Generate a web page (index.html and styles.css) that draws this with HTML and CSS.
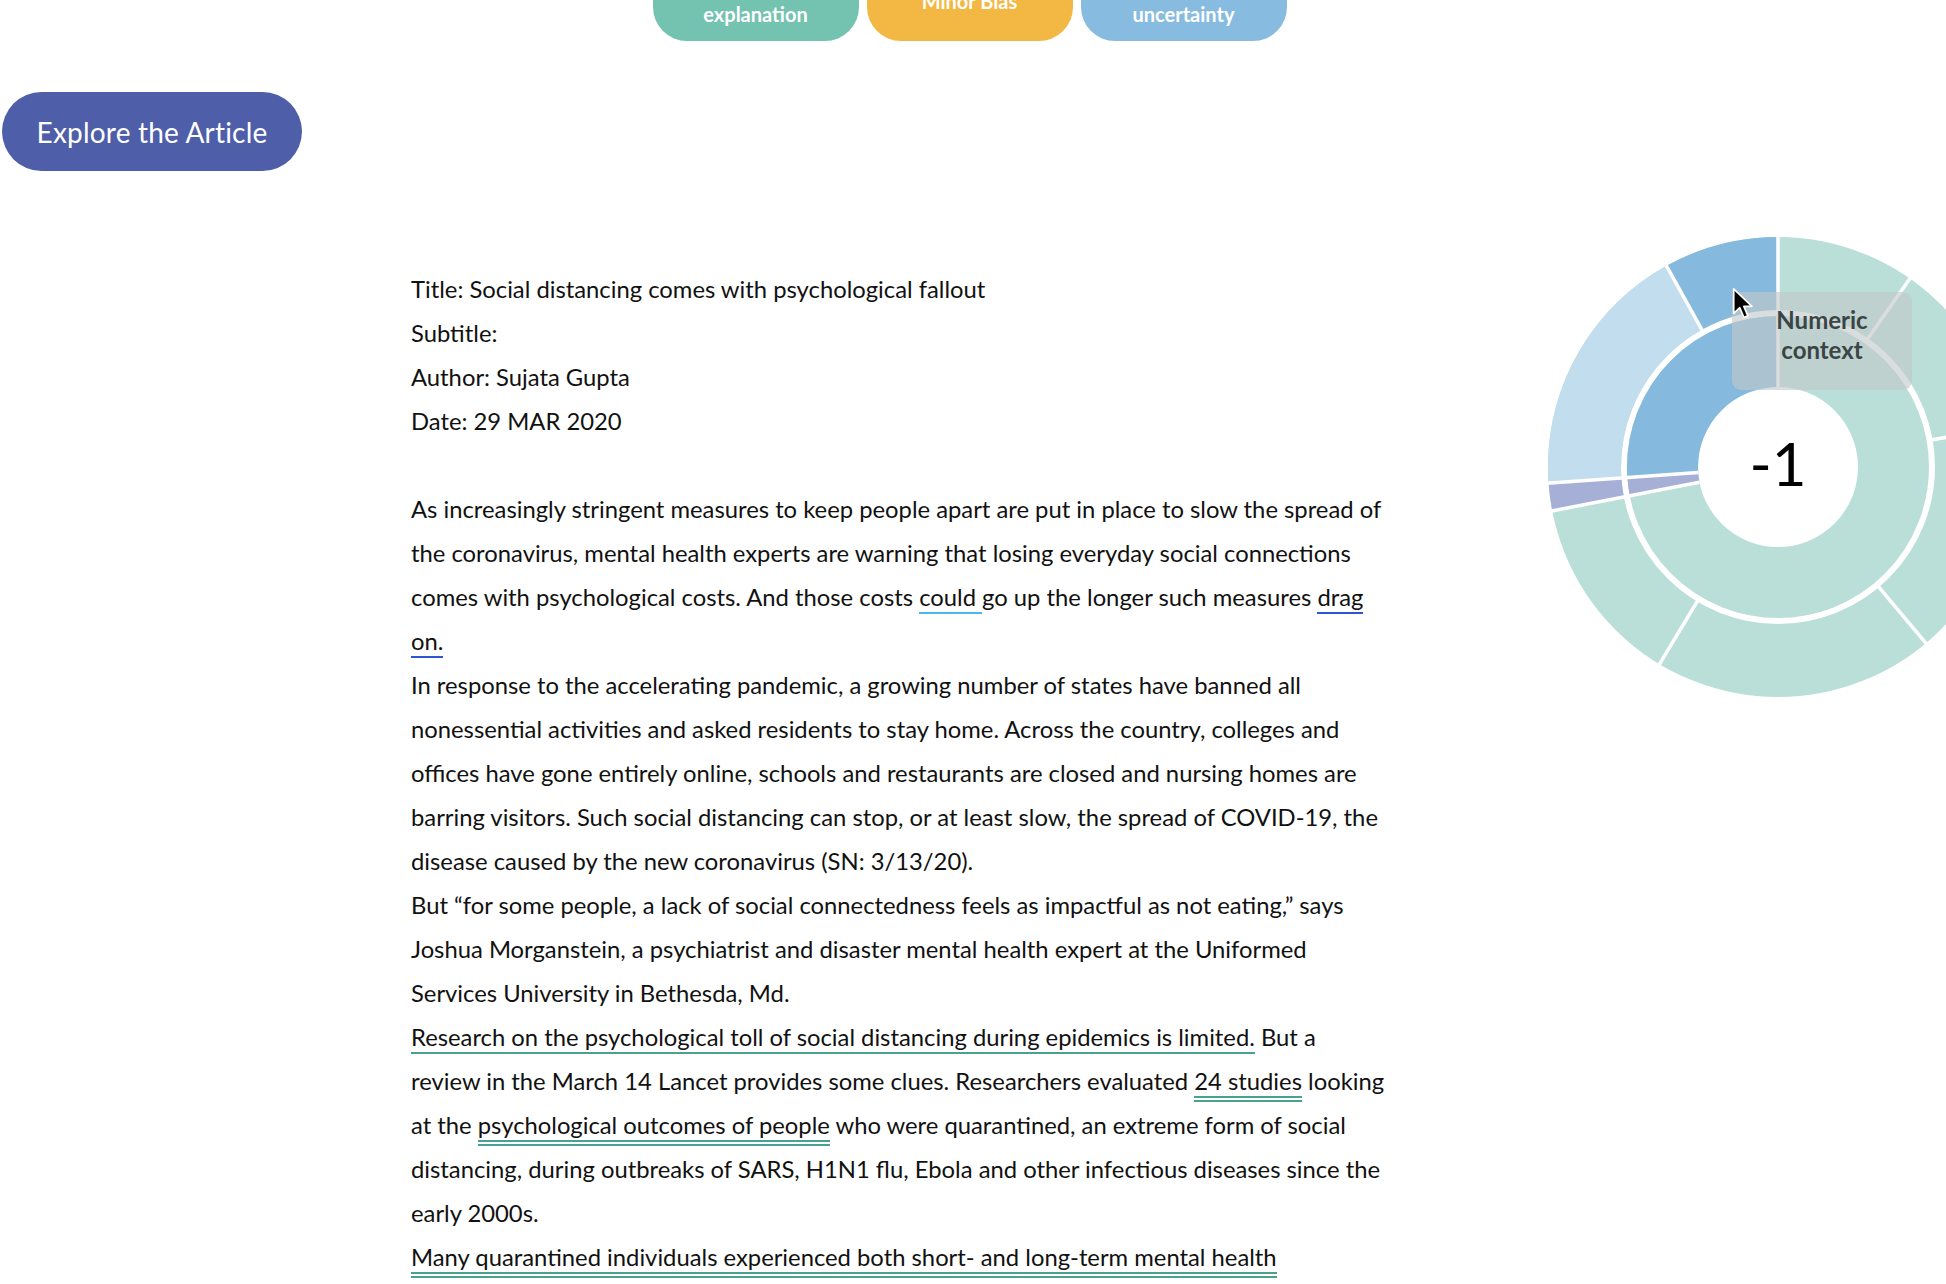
FILE: index.html
```html
<!DOCTYPE html>
<html lang="en">
<head>
<meta charset="utf-8">
<title>Explore the Article</title>
<link rel="stylesheet" href="styles.css">
</head>
<body>
<div class="page">
  <nav class="tags">
    <span class="tag tag-teal">Lacks<br>explanation</span>
    <span class="tag tag-yellow">Minor Bias</span>
    <span class="tag tag-blue">Acknowledging<br>uncertainty</span>
  </nav>

  <div class="explore-row">
    <button class="explore">Explore the Article</button>
  </div>

  <main class="content">
    <article class="article">
      <div class="meta">
        <p>Title: Social distancing comes with psychological fallout</p>
        <p>Subtitle:</p>
        <p>Author: Sujata Gupta</p>
        <p>Date: 29 MAR 2020</p>
      </div>
      <p>As increasingly stringent measures to keep people apart are put in place to slow the spread of the coronavirus, mental health experts are warning that losing everyday social connections comes with psychological costs. And those costs <span class="u u-light">could </span>go up the longer such measures <span class="u u-dark">drag on.</span></p>
      <p>In response to the accelerating pandemic, a growing number of states have banned all nonessential activities and asked residents to stay home. Across the country, colleges and offices have gone entirely online, schools and restaurants are closed and nursing homes are barring visitors. Such social distancing can stop, or at least slow, the spread of COVID-19, the disease caused by the new coronavirus (SN: 3/13/20).</p>
      <p>But “for some people, a lack of social connectedness feels as impactful as not eating,” says Joshua Morganstein, a psychiatrist and disaster mental health expert at the Uniformed Services University in Bethesda, Md.</p>
      <p><span class="u u-teal">Research on the psychological toll of social distancing during epidemics is limited.</span> But a review in the March 14 Lancet provides some clues. Researchers evaluated <span class="uu"><span class="u u-teal">24 studies</span></span> looking at the <span class="uu"><span class="u u-teal">psychological outcomes of people</span></span> who were quarantined, an extreme form of social distancing, during outbreaks of SARS, H1N1 flu, Ebola and other infectious diseases since the early 2000s.</p>
      <p><span class="uu"><span class="u u-teal">Many quarantined individuals experienced both short- and long-term mental health</span></span> consequences, including stress, insomnia, emotional exhaustion, confusion, fear, anger, substance use and symptoms of depression and post-traumatic stress disorder.</p>
    </article>

    <aside class="chart">
      <svg class="sunburst" width="460" height="460" viewBox="0 0 460 460">
        <g transform="rotate(-90 230 230)" fill="none">
          <circle cx="230" cy="230" r="115.5" stroke="#b9dfd8" stroke-width="71"/>
          <circle cx="230" cy="230" r="115.5" stroke="#a6b0d7" stroke-width="71" stroke-dasharray="14.11 800" stroke-dashoffset="-522.11"/>
          <circle cx="230" cy="230" r="115.5" stroke="#85b9dd" stroke-width="71" stroke-dasharray="189.49 800" stroke-dashoffset="-536.22"/>
          <circle cx="230" cy="230" r="193.5" stroke="#b9dfd8" stroke-width="73"/>
          <circle cx="230" cy="230" r="193.5" stroke="#a6b0d7" stroke-width="73" stroke-dasharray="23.64 1300" stroke-dashoffset="-874.70"/>
          <circle cx="230" cy="230" r="193.5" stroke="#c1ddee" stroke-width="73" stroke-dasharray="219.52 1300" stroke-dashoffset="-898.34"/>
          <circle cx="230" cy="230" r="193.5" stroke="#85b9dd" stroke-width="73" stroke-dasharray="97.94 1300" stroke-dashoffset="-1117.86"/>
        </g>
        <g stroke="#ffffff" stroke-width="3.5">
          <line x1="230" y1="150" x2="230" y2="-12"/>
          <line x1="230" y1="150" x2="230" y2="-12" transform="rotate(259 230 230)"/>
          <line x1="230" y1="150" x2="230" y2="-12" transform="rotate(266 230 230)"/>
          <line x1="230" y1="76" x2="230" y2="-12" transform="rotate(35 230 230)"/>
          <line x1="230" y1="76" x2="230" y2="-12" transform="rotate(80 230 230)"/>
          <line x1="230" y1="76" x2="230" y2="-12" transform="rotate(140 230 230)"/>
          <line x1="230" y1="76" x2="230" y2="-12" transform="rotate(211 230 230)"/>
          <line x1="230" y1="76" x2="230" y2="-12" transform="rotate(331 230 230)"/>
        </g>
      </svg>
      <div class="chart-value">-1</div>
      <div class="chart-tip">Numeric<br>context</div>
      <svg class="cursor" width="22" height="34" viewBox="0 0 13 20">
        <path d="M1 1 L1 15.5 L4.6 12.2 L7.1 18 L9.4 17 L7 11.4 L11.8 11.4 Z" fill="#000" stroke="#fff" stroke-width="1" stroke-linejoin="round"/>
      </svg>
    </aside>
  </main>
</div>
</body>
</html>
```

FILE: styles.css
```css
html {
  overflow: hidden;
}

body {
  margin: 0;
  background: #ffffff;
  color: #111111;
  font-family: Lato, "Noto Sans", sans-serif;
}

.page {
  width: 1946px;
}

.tags {
  display: flex;
  justify-content: center;
  gap: 8px;
  margin-top: -39px;
  padding-right: 7px;
}

.tag {
  width: 206px;
  height: 80px;
  border-radius: 34px;
  display: flex;
  align-items: center;
  justify-content: center;
  text-align: center;
  color: #ffffff;
  font-weight: 700;
  font-size: 20px;
  line-height: 26px;
}

.tag-teal { background: #74c2b0; }
.tag-yellow { background: #f2b843; }
.tag-blue { background: #87bce0; }

.explore-row {
  margin-top: 51px;
  padding-left: 2px;
}

.explore {
  width: 300px;
  height: 79px;
  border: none;
  border-radius: 40px;
  background: #4e5ea9;
  color: #ffffff;
  font-family: Lato, "Noto Sans", sans-serif;
  font-size: 28px;
  letter-spacing: 0.2px;
  padding: 0;
}

.content {
  display: flex;
  align-items: flex-start;
  margin-top: 66px;
}

.article {
  margin-left: 411px;
  width: 976px;
  flex-shrink: 0;
  padding-top: 30px;
  font-size: 23.8px;
  line-height: 44px;
  color: #111111;
}

.article p {
  margin: 0;
}

.meta {
  margin-bottom: 44px;
}

.u {
  padding-bottom: 1px;
  border-bottom: 2px solid transparent;
}

.u-light { border-bottom-color: #4cb6ee; }
.u-dark { border-bottom-color: #2f55d4; }
.u-teal { border-bottom-color: #4aa191; }

.uu {
  padding-bottom: 5px;
  border-bottom: 2px solid #4aa191;
}

.chart {
  position: relative;
  flex-shrink: 0;
  width: 460px;
  height: 460px;
  margin-left: 161px;
}

.sunburst {
  display: block;
  overflow: visible;
}

.chart-value {
  position: absolute;
  left: 0;
  right: 0;
  top: 190px;
  text-align: center;
  font-size: 60px;
  line-height: 72px;
  color: #000000;
}

.chart-tip {
  position: absolute;
  left: 184px;
  top: 55px;
  width: 180px;
  height: 98px;
  box-sizing: border-box;
  padding-top: 13px;
  border-radius: 9px;
  background: rgba(196, 200, 200, 0.62);
  color: #3a4646;
  font-weight: 700;
  font-size: 24px;
  line-height: 30px;
  text-align: center;
}

.cursor {
  position: absolute;
  left: 184px;
  top: 50px;
}
```
